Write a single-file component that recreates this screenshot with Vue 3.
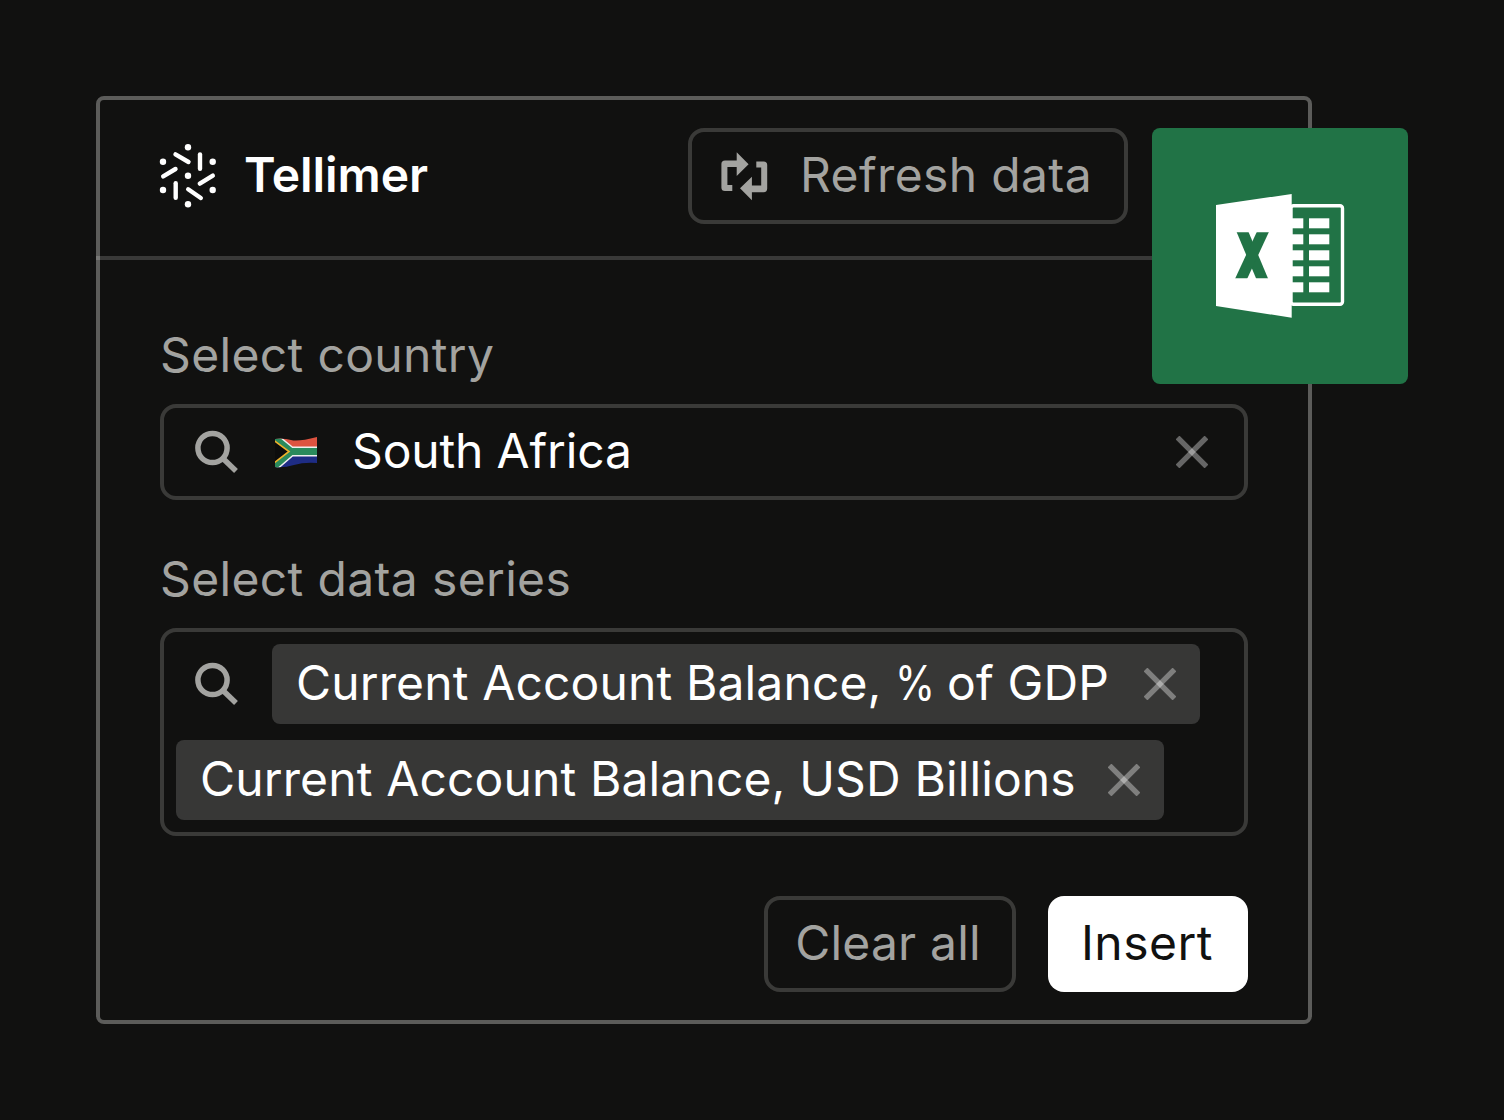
<template>
  <div class="page">
    <div class="panel">
      <div class="header">
        <div class="brand">
          <svg class="brand-logo" width="60" height="68" viewBox="0 0 60 68" fill="#fff">
            <g stroke="#fff" stroke-width="4.4" stroke-linecap="round">
              <line x1="17.5" y1="12.3" x2="30.5" y2="20" />
              <line x1="42" y1="12.5" x2="42" y2="26.8" />
              <line x1="5.2" y1="34.4" x2="17.5" y2="27" />
              <line x1="41.8" y1="41.7" x2="54.8" y2="33.6" />
              <line x1="17.7" y1="41.2" x2="17.7" y2="55.8" />
              <line x1="30.2" y1="47.3" x2="42.8" y2="56" />
            </g>
            <circle cx="30" cy="5.3" r="3.2" />
            <circle cx="5" cy="19.7" r="3.2" />
            <circle cx="54.7" cy="19.7" r="3.2" />
            <circle cx="30" cy="33.7" r="3.2" />
            <circle cx="5" cy="48" r="3.2" />
            <circle cx="54.7" cy="48" r="3.2" />
            <circle cx="30" cy="62.3" r="3.2" />
          </svg>
          <span class="brand-name">Tellimer</span>
        </div>
        <button class="btn refresh">
          <svg width="48" height="52" viewBox="0 0 48 52" fill="currentColor">
            <path d="M16.7 2.3 28.6 14.3 16.7 25.9V17H7.4V35H12.3V41H5Q1.4 41 1.4 37.5V14Q1.4 10.4 5 10.4H16.7Z" />
            <path d="M16.7 2.3 28.6 14.3 16.7 25.9V17H7.4V35H12.3V41H5Q1.4 41 1.4 37.5V14Q1.4 10.4 5 10.4H16.7Z" transform="rotate(180 24.3 26.3)" />
          </svg>
          <span class="refresh-text">Refresh data</span>
        </button>
      </div>

      <div class="body">
        <div class="label">Select country</div>
        <div class="field country">
          <svg class="search" width="48" height="48" viewBox="0 0 48 48" fill="none" stroke="currentColor" stroke-width="5.5">
            <circle cx="20.5" cy="20" r="14.6" />
            <line x1="31" y1="30.5" x2="44" y2="43" />
          </svg>
          <svg class="flag" width="44" height="34" viewBox="0 0 44 34">
            <defs>
              <clipPath id="wave">
                <path d="M1 4Q10 3 17 5T43 2V28Q30 27 20 30T1 32Z" />
              </clipPath>
            </defs>
            <g clip-path="url(#wave)">
              <rect width="44" height="17" fill="#dd5340" />
              <rect y="17" width="44" height="17" fill="#1e2c84" />
              <path d="M-2 1 17 16.5H46M-2 33 17 16.5" fill="none" stroke="#eee" stroke-width="10" />
              <path d="M-2 1 17 16.5H46M-2 33 17 16.5" fill="none" stroke="#2a8a5c" stroke-width="7" />
              <path d="M0 5.5 15 16.5 0 28Z" fill="#0c0c0c" stroke="#eeb02a" stroke-width="1.6" />
            </g>
          </svg>
          <span class="country-name">South Africa</span>
          <svg class="clear" width="32" height="32" viewBox="0 0 32 32" stroke="#fff" stroke-opacity="0.36" stroke-width="5.4">
            <line x1="1.5" y1="1.5" x2="30.5" y2="30.5" />
            <line x1="30.5" y1="1.5" x2="1.5" y2="30.5" />
          </svg>
        </div>

        <div class="label second">Select data series</div>
        <div class="field series">
          <svg class="search series-search" width="48" height="48" viewBox="0 0 48 48" fill="none" stroke="currentColor" stroke-width="5.5">
            <circle cx="20.5" cy="20" r="14.6" />
            <line x1="31" y1="30.5" x2="44" y2="43" />
          </svg>
          <div class="tag tag-gdp">
            <span class="tag-text">Current Account Balance, <span class="pct">%</span> of GDP</span>
            <svg width="32" height="32" viewBox="0 0 32 32" stroke="#fff" stroke-opacity="0.36" stroke-width="5.4">
              <line x1="1.5" y1="1.5" x2="30.5" y2="30.5" />
              <line x1="30.5" y1="1.5" x2="1.5" y2="30.5" />
            </svg>
          </div>
          <div class="tag">
            <span class="tag-text">Current Account Balance, USD Billions</span>
            <svg width="32" height="32" viewBox="0 0 32 32" stroke="#fff" stroke-opacity="0.36" stroke-width="5.4">
              <line x1="1.5" y1="1.5" x2="30.5" y2="30.5" />
              <line x1="30.5" y1="1.5" x2="1.5" y2="30.5" />
            </svg>
          </div>
        </div>

        <div class="actions">
          <button class="btn clear-all">Clear all</button>
          <button class="btn insert">Insert</button>
        </div>
      </div>

      <svg class="excel" width="256" height="256" viewBox="0 0 256 256">
        <defs>
          <clipPath id="xclip">
            <rect x="80" y="104.3" width="40" height="46" />
          </clipPath>
        </defs>
        <rect x="139" y="77.7" width="51.5" height="98.6" rx="2.5" fill="none" stroke="#fff" stroke-width="3.4" />
        <g fill="#fff">
          <rect v-for="y in rows" :key="'a' + y" x="139.7" :y="y" width="11.6" height="10" />
          <rect v-for="y in rows" :key="'b' + y" x="157" :y="y" width="20.3" height="10" />
          <path d="M64 77 139.7 66V189.7L64 178Z" />
        </g>
        <g clip-path="url(#xclip)" stroke="#217346" stroke-width="11">
          <line x1="88.6" y1="99.3" x2="112.1" y2="155.3" />
          <line x1="113" y1="99.3" x2="87" y2="155.3" />
        </g>
      </svg>
    </div>
  </div>
</template>

<script setup>
const rows = [90.3, 106.3, 122.3, 138.3, 154.3]
</script>

<style>
html,
body {
  background: #111110;
}
</style>

<style scoped>
.page {
  width: 1504px;
  height: 1120px;
  box-sizing: border-box;
  padding: 96px 192px 96px 96px;
  background: #111110;
  font-family: Inter, "Liberation Sans", sans-serif;
}

.panel {
  position: relative;
  height: 928px;
  box-sizing: border-box;
  border: 4px solid #5c5c5a;
  border-radius: 8px;
}

.header {
  display: flex;
  align-items: center;
  justify-content: space-between;
  height: 160px;
  box-sizing: border-box;
  margin-left: -4px;
  padding: 0 180px 4px 62px;
  border-bottom: 4px solid rgba(255, 255, 255, 0.17);
}

.brand {
  display: flex;
  align-items: center;
  gap: 26px;
}

.brand-name {
  padding-bottom: 4px;
  font-size: 48px;
  font-weight: 600;
  letter-spacing: -0.1px;
  color: #fff;
}

.btn {
  box-sizing: border-box;
  height: 96px;
  padding: 0 0 4px;
  border-radius: 16px;
  font-family: inherit;
  font-size: 48px;
  background: transparent;
}

.refresh {
  display: flex;
  align-items: center;
  gap: 32px;
  width: 440px;
  padding: 0 0 0 28px;
  border: 4px solid #3a3a38;
  color: #a3a3a0;
}

.refresh-text {
  padding-bottom: 4px;
  letter-spacing: 0.36px;
}

.body {
  padding: 67px 60px 0;
}

.label {
  font-size: 48px;
  line-height: 56px;
  letter-spacing: 0.35px;
  color: #a3a3a0;
}

.label.second {
  margin-top: 51px;
}

.field {
  box-sizing: border-box;
  margin-top: 21px;
  border: 4px solid #3a3a38;
  border-radius: 16px;
  color: #a3a3a0;
}

.country {
  display: flex;
  align-items: center;
  height: 96px;
  padding: 0 36px 0 28px;
}

.flag {
  margin-left: 34px;
}

.country-name {
  flex: 1;
  margin-left: 34px;
  padding-bottom: 4px;
  font-size: 48px;
  letter-spacing: -0.17px;
  color: #fff;
}

.series {
  display: flex;
  flex-wrap: wrap;
  align-items: center;
  gap: 16px;
  height: 208px;
  padding: 12px;
}

.series-search {
  margin: 0 16px;
}

.tag {
  display: flex;
  align-items: center;
  gap: 32px;
  height: 80px;
  padding: 0 24px;
  border-radius: 8px;
  background: #373736;
  font-size: 48px;
  color: #fff;
}

.tag-gdp {
  gap: 35px;
}

.tag-text {
  padding-bottom: 4px;
  letter-spacing: 0.135px;
}

.pct {
  display: inline-block;
  margin-right: -9px;
  transform: scaleX(0.85);
  transform-origin: left center;
}

.actions {
  display: flex;
  justify-content: flex-end;
  gap: 32px;
  margin-top: 60px;
}

.clear-all {
  width: 252px;
  padding-right: 4px;
  border: 4px solid #3a3a38;
  letter-spacing: 0.2px;
  color: #a3a3a0;
}

.insert {
  width: 200px;
  padding-right: 2px;
  border: 0;
  letter-spacing: 0.5px;
  background: #fff;
  color: #111110;
}

.excel {
  position: absolute;
  top: 28px;
  right: -100px;
  border-radius: 8px;
  background: #217346;
}
</style>
